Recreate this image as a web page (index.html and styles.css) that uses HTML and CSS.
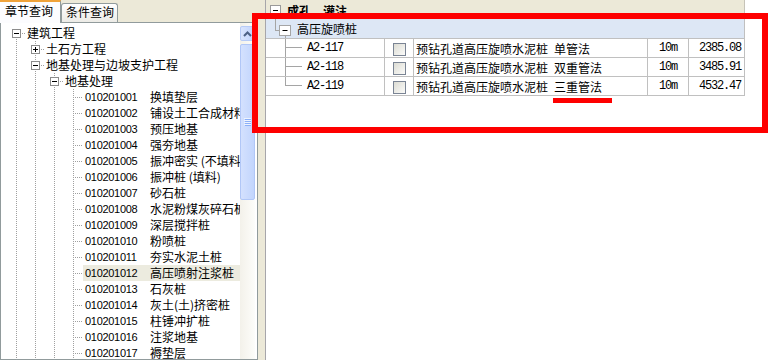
FILE: index.html
```html
<!DOCTYPE html>
<html lang="zh-CN">
<head>
  <meta charset="utf-8">
  <title>定额查询</title>
  <link rel="stylesheet" href="styles.css">
</head>
<body>
  <div class="app">
    <div class="side">
      <div class="tabs">
        <div class="tab on">章节查询</div>
        <div class="tab">条件查询</div>
      </div>
      <div class="treebox">
        <div class="tree">
          <div class="node">
            <span class="cell btn root"><svg width="9" height="9"><rect x=".5" y=".5" width="8" height="8" fill="#fff" stroke="#8c8c8c"/><path d="M2 4.5h5" stroke="#000"/></svg></span>
            <span class="txt">建筑工程</span>
          </div>
          <div class="node">
            <span class="cell v"></span>
            <span class="cell btn"><svg width="9" height="9"><rect x=".5" y=".5" width="8" height="8" fill="#fff" stroke="#8c8c8c"/><path d="M2 4.5h5M4.5 2v5" stroke="#000"/></svg></span>
            <span class="txt">土石方工程</span>
          </div>
          <div class="node">
            <span class="cell v"></span>
            <span class="cell btn"><svg width="9" height="9"><rect x=".5" y=".5" width="8" height="8" fill="#fff" stroke="#8c8c8c"/><path d="M2 4.5h5" stroke="#000"/></svg></span>
            <span class="txt">地基处理与边坡支护工程</span>
          </div>
          <div class="node">
            <span class="cell v"></span><span class="cell v"></span>
            <span class="cell btn"><svg width="9" height="9"><rect x=".5" y=".5" width="8" height="8" fill="#fff" stroke="#8c8c8c"/><path d="M2 4.5h5" stroke="#000"/></svg></span>
            <span class="txt">地基处理</span>
          </div>
          <div class="node"><span class="cell v"></span><span class="cell v"></span><span class="cell v"></span><span class="cell tee"></span><span class="lbl"><span class="code">010201001</span><span class="name">换填垫层</span></span></div>
          <div class="node"><span class="cell v"></span><span class="cell v"></span><span class="cell v"></span><span class="cell tee"></span><span class="lbl"><span class="code">010201002</span><span class="name">铺设土工合成材料</span></span></div>
          <div class="node"><span class="cell v"></span><span class="cell v"></span><span class="cell v"></span><span class="cell tee"></span><span class="lbl"><span class="code">010201003</span><span class="name">预压地基</span></span></div>
          <div class="node"><span class="cell v"></span><span class="cell v"></span><span class="cell v"></span><span class="cell tee"></span><span class="lbl"><span class="code">010201004</span><span class="name">强夯地基</span></span></div>
          <div class="node"><span class="cell v"></span><span class="cell v"></span><span class="cell v"></span><span class="cell tee"></span><span class="lbl"><span class="code">010201005</span><span class="name">振冲密实 (不填料)</span></span></div>
          <div class="node"><span class="cell v"></span><span class="cell v"></span><span class="cell v"></span><span class="cell tee"></span><span class="lbl"><span class="code">010201006</span><span class="name">振冲桩 (填料)</span></span></div>
          <div class="node"><span class="cell v"></span><span class="cell v"></span><span class="cell v"></span><span class="cell tee"></span><span class="lbl"><span class="code">010201007</span><span class="name">砂石桩</span></span></div>
          <div class="node"><span class="cell v"></span><span class="cell v"></span><span class="cell v"></span><span class="cell tee"></span><span class="lbl"><span class="code">010201008</span><span class="name">水泥粉煤灰碎石桩</span></span></div>
          <div class="node"><span class="cell v"></span><span class="cell v"></span><span class="cell v"></span><span class="cell tee"></span><span class="lbl"><span class="code">010201009</span><span class="name">深层搅拌桩</span></span></div>
          <div class="node"><span class="cell v"></span><span class="cell v"></span><span class="cell v"></span><span class="cell tee"></span><span class="lbl"><span class="code">010201010</span><span class="name">粉喷桩</span></span></div>
          <div class="node"><span class="cell v"></span><span class="cell v"></span><span class="cell v"></span><span class="cell tee"></span><span class="lbl"><span class="code">010201011</span><span class="name">夯实水泥土桩</span></span></div>
          <div class="node"><span class="cell v"></span><span class="cell v"></span><span class="cell v"></span><span class="cell tee"></span><span class="lbl sel"><span class="code">010201012</span><span class="name">高压喷射注浆桩</span></span></div>
          <div class="node"><span class="cell v"></span><span class="cell v"></span><span class="cell v"></span><span class="cell tee"></span><span class="lbl"><span class="code">010201013</span><span class="name">石灰桩</span></span></div>
          <div class="node"><span class="cell v"></span><span class="cell v"></span><span class="cell v"></span><span class="cell tee"></span><span class="lbl"><span class="code">010201014</span><span class="name">灰土(土)挤密桩</span></span></div>
          <div class="node"><span class="cell v"></span><span class="cell v"></span><span class="cell v"></span><span class="cell tee"></span><span class="lbl"><span class="code">010201015</span><span class="name">柱锤冲扩桩</span></span></div>
          <div class="node"><span class="cell v"></span><span class="cell v"></span><span class="cell v"></span><span class="cell tee"></span><span class="lbl"><span class="code">010201016</span><span class="name">注浆地基</span></span></div>
          <div class="node"><span class="cell v"></span><span class="cell v"></span><span class="cell v"></span><span class="cell tee"></span><span class="lbl"><span class="code">010201017</span><span class="name">褥垫层</span></span></div>
        </div>
        <div class="vscroll">
          <div class="sb-up"><svg width="9" height="6"><path d="M1 5l3.5-3.5L8 5" fill="none" stroke="#4d6185" stroke-width="2"/></svg></div>
          <div class="sb-thumb"><svg width="7" height="8"><path d="M0 .5h7M0 2.5h7M0 4.5h7M0 6.5h7" stroke="#eef4fe"/><path d="M1 1.5h7M1 3.5h7M1 5.5h7M1 7.5h7" stroke="#8cb0f8"/></svg></div>
        </div>
      </div>
    </div>
    <div class="splitter"></div>
    <div class="main">
      <div class="grid">
        <div class="grp">
          <svg width="11" height="11"><rect x=".5" y=".5" width="10" height="10" fill="#fff" stroke="#9a9a9a"/><path d="M3 5.5h5" stroke="#000"/></svg>
          <span class="grp-title">成孔、灌注</span>
        </div>
        <div class="sub">
          <span class="elbow"></span>
          <span class="pmwrap"><svg width="12" height="11"><rect x=".5" y=".5" width="11" height="10" fill="#fff" stroke="#a5a5a5"/><path d="M3.5 5.5h5" stroke="#000"/></svg></span>
          <span class="sub-title">高压旋喷桩</span>
        </div>
        <div class="row">
          <div class="c c1"><span class="branch"></span><span class="mono">A2-117</span></div>
          <div class="c c2"><span class="chk"></span></div>
          <div class="c c3">预钻孔道高压旋喷水泥桩<span class="gap"></span>单管法</div>
          <div class="c c4"><span class="mono">10m</span></div>
          <div class="c c5"><span class="mono">2385.08</span></div>
        </div>
        <div class="row">
          <div class="c c1"><span class="branch"></span><span class="mono">A2-118</span></div>
          <div class="c c2"><span class="chk"></span></div>
          <div class="c c3">预钻孔道高压旋喷水泥桩<span class="gap"></span>双重管法</div>
          <div class="c c4"><span class="mono">10m</span></div>
          <div class="c c5"><span class="mono">3485.91</span></div>
        </div>
        <div class="row">
          <div class="c c1"><span class="branch last"></span><span class="mono">A2-119</span></div>
          <div class="c c2"><span class="chk"></span></div>
          <div class="c c3">预钻孔道高压旋喷水泥桩<span class="gap"></span>三重管法</div>
          <div class="c c4"><span class="mono">10m</span></div>
          <div class="c c5"><span class="mono">4532.47</span></div>
        </div>
      </div>
    </div>
  </div>

  <div class="mark-box"></div>
  <div class="mark-line"></div>
</body>
</html>
```

FILE: styles.css
```css
* {
  box-sizing: border-box;
}
html, body {
  margin: 0;
}
body {
  width: 778px;
  height: 360px;
  overflow: hidden;
  position: relative;
  background: #fff;
  color: #000;
  font-family: "Noto Sans CJK SC", "Liberation Sans", sans-serif;
  font-size: 12px;
}
.app {
  display: flex;
  height: 360px;
}

/* left: chapter tree */
.side {
  width: 258px;
  flex: none;
  display: flex;
  flex-direction: column;
  background: #ece9d8;
}
.tabs {
  height: 22px;
  display: flex;
  align-items: flex-end;
  position: relative;
  z-index: 1;
}
.tab {
  height: 19px;
  width: 57px;
  padding: 0 0 0 4px;
  line-height: 16px;
  border: 1px solid #919b9c;
  border-bottom: none;
  border-radius: 3px 3px 0 0;
  background: linear-gradient(#fff, #ecebe6);
  white-space: nowrap;
}
.tab.on {
  height: 23px;
  width: 61px;
  margin-bottom: -1px;
  padding-left: 5px;
  border-top: 2px solid #f0a33a;
  border-left: none;
  border-radius: 0;
  background: #fcfcfe;
  line-height: 17px;
}
.treebox {
  flex: 1;
  display: flex;
  background: #fff;
  border: 1px solid #919b9c;
  padding-right: 2px;
  overflow: hidden;
}
.tree {
  flex: 1;
  padding: 2px 0 0 6px;
  overflow: hidden;
  white-space: nowrap;
}
.node {
  display: flex;
  height: 16px;
  line-height: 16px;
}
.cell {
  flex: none;
  width: 19px;
  height: 16px;
}
.cell.v {
  background: repeating-linear-gradient(to bottom, #a0a0a0 0 1px, transparent 1px 2px) 9px 0 / 1px 16px no-repeat;
}
.cell.tee {
  background:
    repeating-linear-gradient(to bottom, #a0a0a0 0 1px, transparent 1px 2px) 9px 0 / 1px 16px no-repeat,
    repeating-linear-gradient(to right, #a0a0a0 0 1px, transparent 1px 2px) 11px 8px / 8px 1px no-repeat;
}
.cell.btn {
  padding: 4px 0 0 5px;
  background:
    repeating-linear-gradient(to bottom, #a0a0a0 0 1px, transparent 1px 2px) 9px 0 / 1px 16px no-repeat,
    repeating-linear-gradient(to right, #a0a0a0 0 1px, transparent 1px 2px) 15px 8px / 4px 1px no-repeat;
}
.cell.btn.root {
  background:
    repeating-linear-gradient(to bottom, #a0a0a0 0 1px, transparent 1px 2px) 9px 12px / 1px 4px no-repeat,
    repeating-linear-gradient(to right, #a0a0a0 0 1px, transparent 1px 2px) 15px 8px / 4px 1px no-repeat;
}
.cell svg {
  display: block;
}
.txt {
  margin-left: 1px;
}
.lbl {
  display: flex;
  flex: 1;
  padding-left: 2px;
}
.lbl.sel {
  background: #ecebdf;
}
.code {
  width: 65px;
  flex: none;
  font-family: "Liberation Sans", sans-serif;
  font-size: 11px;
  letter-spacing: -0.3px;
}

/* scrollbar */
.vscroll {
  width: 15px;
  flex: none;
  padding-top: 3px;
  background: linear-gradient(to right, #f3f1ea, #fdfdfa);
}
.sb-up {
  height: 15px;
  display: flex;
  align-items: center;
  justify-content: center;
  border: 1px solid #b7cbf6;
  border-radius: 2px;
  background: linear-gradient(to right, #dae5fe, #c0d3fc);
}
.sb-thumb {
  height: 156px;
  margin-top: 3px;
  display: flex;
  align-items: center;
  justify-content: center;
  border: 1px solid #b1c7f7;
  border-radius: 2px;
  background: linear-gradient(to right, #d4e1fe, #c2d5fd);
}

.splitter {
  width: 7px;
  flex: none;
  background: #ece9d8;
}

/* right: item grid */
.main {
  flex: 1;
  border-left: 1px solid #a7a6aa;
  background: #fff;
}
.grid {
  width: 479px;
}
.grp {
  height: 19px;
  display: flex;
  align-items: center;
  padding: 2px 0 0 4px;
  background: #ece9d8;
  border-right: 1px solid #c6c3b8;
}
.grp svg {
  display: block;
}
.grp-title {
  margin-left: 6px;
  font-weight: bold;
}
.sub {
  height: 20px;
  display: flex;
  background: #dde7f5;
  border-bottom: 1px solid #c0c0c0;
  border-right: 1px solid #c0c0c0;
}
.elbow {
  width: 4px;
  margin-left: 9px;
  background:
    linear-gradient(#a5a5a5, #a5a5a5) 0 0 / 1px 12px no-repeat,
    linear-gradient(#a5a5a5, #a5a5a5) 0 11px / 4px 1px no-repeat;
}
.pmwrap {
  width: 12px;
  padding-top: 6px;
  background: linear-gradient(#a5a5a5, #a5a5a5) 6px 17px / 1px 3px no-repeat;
}
.pmwrap svg {
  display: block;
}
.sub-title {
  margin-left: 6px;
  line-height: 19px;
}
.row {
  display: grid;
  grid-template-columns: 119px 29px 234px 41px 56px;
  height: 19px;
  border-bottom: 1px solid #c0c0c0;
}
.c {
  display: flex;
  align-items: center;
  border-right: 1px solid #c0c0c0;
  white-space: nowrap;
  overflow: hidden;
}
.branch {
  width: 18px;
  height: 18px;
  margin-left: 19px;
  flex: none;
  background:
    linear-gradient(#a5a5a5, #a5a5a5) 0 0 / 1px 18px no-repeat,
    linear-gradient(#a5a5a5, #a5a5a5) 0 8px / 17px 1px no-repeat;
}
.branch.last {
  background:
    linear-gradient(#a5a5a5, #a5a5a5) 0 0 / 1px 9px no-repeat,
    linear-gradient(#a5a5a5, #a5a5a5) 0 8px / 17px 1px no-repeat;
}
.mono {
  font-family: "Liberation Mono", monospace;
  font-size: 12px;
  letter-spacing: -1.2px;
}
.c1 .mono {
  margin-left: 4px;
}
.c2 {
  justify-content: center;
}
.chk {
  width: 13px;
  height: 13px;
  margin-top: 2px;
  border: 1px solid #7a8494;
  background: linear-gradient(135deg, #dcdcd4, #fbfbf9);
}
.c3 {
  padding-left: 2px;
}
.gap {
  width: 6px;
  flex: none;
}
.c4 {
  justify-content: center;
}
.c5 {
  justify-content: flex-end;
  padding-right: 3px;
}

/* red annotation drawn over the screenshot */
.mark-box {
  position: absolute;
  left: 252px;
  top: 13px;
  width: 516px;
  height: 120px;
  border: 6px solid #fe0000;
}
.mark-line {
  position: absolute;
  left: 553px;
  top: 98px;
  width: 59px;
  height: 5px;
  background: #fe0000;
}
```
